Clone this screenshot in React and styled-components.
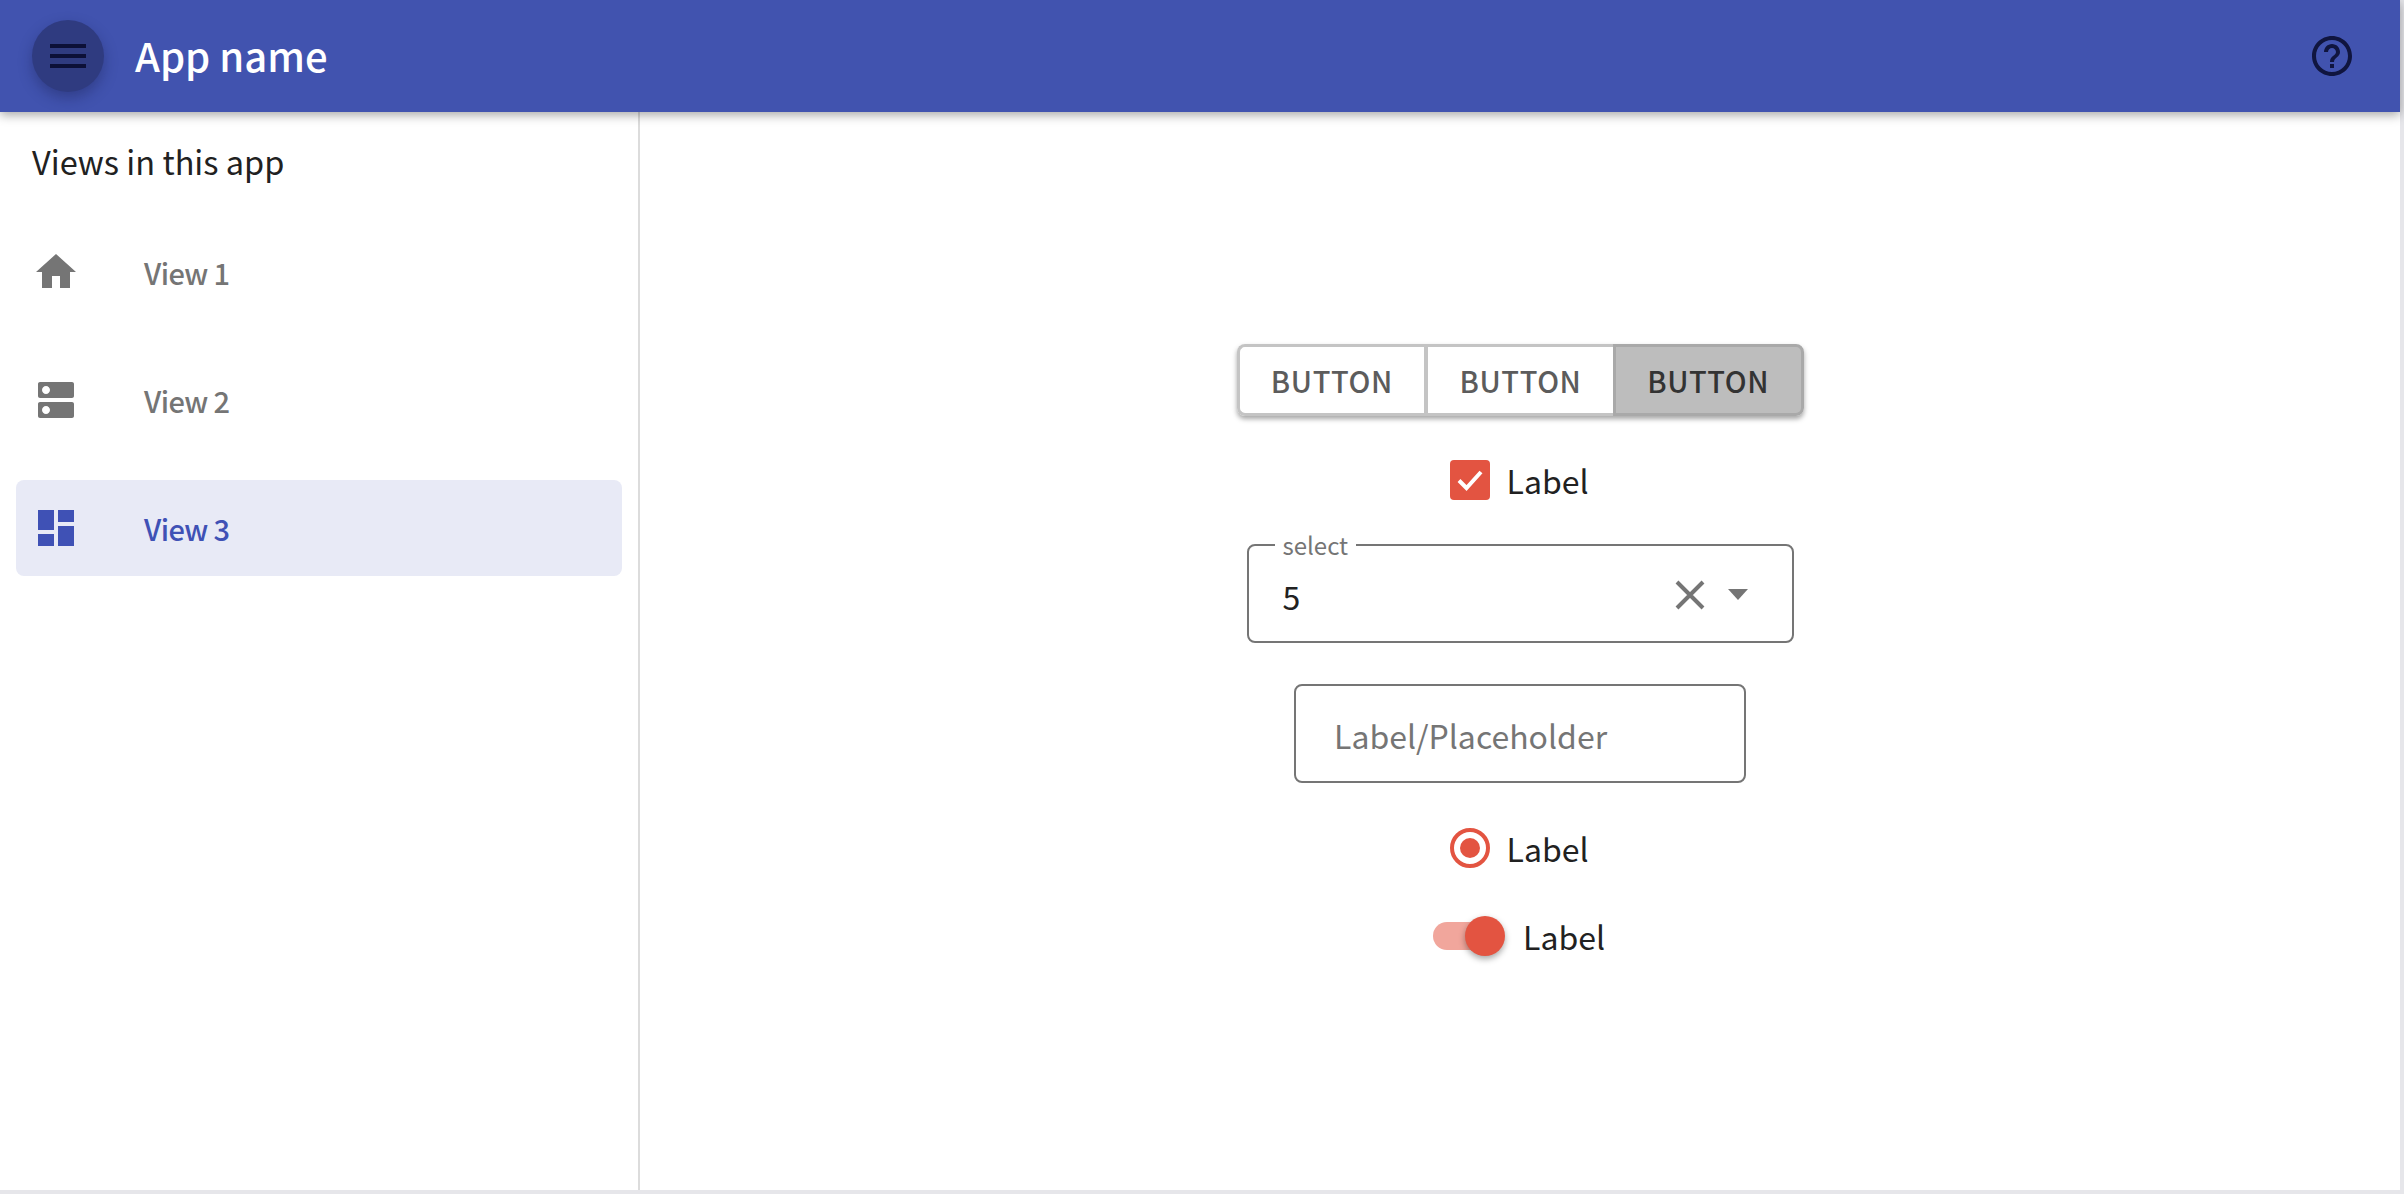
import React from 'react'
import styled, { createGlobalStyle } from 'styled-components'

const GlobalStyle = createGlobalStyle`
html, body {
  margin: 0;
  padding: 0;
  background: #e6e6ea;
}
body {
  font-family: "Noto Sans CJK JP", "Noto Sans", sans-serif;
  overflow: hidden;
}
* {
  box-sizing: border-box;
}
`;

const Page = styled.div`
width: 2400px;
height: 1190px;
background: #fff;
display: flex;
flex-direction: column;
`;

const Header = styled.header`
position: relative;
z-index: 2;
height: 112px;
flex-shrink: 0;
display: flex;
align-items: center;
padding: 0 44px 0 32px;
background: #4153af;
box-shadow: 0 3px 10px rgba(0, 0, 0, 0.35);
`;

const MenuButton = styled.div`
width: 72px;
height: 72px;
border-radius: 50%;
background: #2f3b80;
box-shadow: 0 6px 14px rgba(20, 25, 70, 0.35);
display: flex;
flex-direction: column;
justify-content: center;
align-items: center;
gap: 6px;

span {
  display: block;
  width: 36px;
  height: 4px;
  background: #0c1038;
}
`;

const AppName = styled.h1`
margin: -2px 0 0 31px;
font-size: 40px;
line-height: 56px;
font-weight: 500;
color: #fff;
flex: 1;
`;

const HelpIcon = styled.svg`
width: 48px;
height: 48px;
fill: #10153f;
`;

const Body = styled.div`
flex: 1;
display: flex;
min-height: 0;
`;

const Sidebar = styled.nav`
width: 640px;
flex-shrink: 0;
border-right: 2px solid #dcdcdc;
padding: 27px 16px 0;
`;

const SidebarTitle = styled.div`
padding-left: 16px;
font-size: 32.5px;
line-height: 44px;
color: #212121;
margin-bottom: 41px;
`;

const NavItem = styled.div`
height: 96px;
margin-bottom: 32px;
border-radius: 8px;
display: flex;
align-items: center;
padding-left: 16px;
background: ${({ active }) => (active ? '#e8eaf6' : 'transparent')};
color: ${({ active }) => (active ? '#3f51b5' : '#757575')};
font-size: 29px;
letter-spacing: -0.6px;
font-weight: 500;

svg {
  width: 48px;
  height: 48px;
  fill: currentColor;
  flex-shrink: 0;
  margin-right: 64px;
}
`;

const Main = styled.main`
flex: 1;
display: flex;
flex-direction: column;
align-items: center;
justify-content: center;
padding-bottom: 2px;
`;

const ButtonGroup = styled.div`
display: flex;
width: 567px;
height: 72px;
border-radius: 8px;
box-shadow: 0 3px 5px rgba(0, 0, 0, 0.35);
background: #fff;
`;

const GroupButton = styled.div`
flex: 1;
display: flex;
justify-content: center;
align-items: center;
font-size: 29px;
font-weight: 500;
letter-spacing: 0.6px;
color: ${({ selected }) => (selected ? '#333' : '#5c5c5c')};
background: ${({ selected }) => (selected ? '#bdbdbd' : '#fff')};
border: 3px solid ${({ selected }) => (selected ? '#a9a9a9' : '#c4c4c4')};
border-right-width: ${({ selected }) => (selected ? '3px' : '0')};
border-left-width: ${({ divided }) => (divided ? '4px' : '3px')};

&:first-child {
  border-radius: 8px 0 0 8px;
}

&:last-child {
  border-radius: 0 8px 8px 0;
}
`;

const Row = styled.div`
display: flex;
align-items: center;
height: 40px;
margin-top: ${({ top }) => top}px;
padding-right: 2px;
font-size: 32px;
color: #212121;
gap: 17px;
`;

const CheckBox = styled.div`
width: 40px;
height: 40px;
border-radius: 4px;
background: #e35441;
display: flex;
align-items: center;
justify-content: center;

svg {
  width: 30px;
  height: 30px;
  fill: none;
  stroke: #fff;
  stroke-width: 4;
}
`;

const SelectBox = styled.fieldset`
position: relative;
width: 547px;
height: 109px;
margin: 34px 0 0;
padding: 17px 0 0 26px;
border: 2px solid #757575;
border-radius: 8px;
display: flex;
align-items: center;

legend {
  padding: 0 8px;
  margin-left: 0;
  font-size: 24px;
  line-height: 22px;
  color: #757575;
}
`;

const SelectValue = styled.div`
flex: 1;
padding-left: 8px;
font-size: 32px;
color: #212121;
`;

const ClearIcon = styled.svg`
width: 32px;
height: 32px;
margin-right: 22px;
margin-top: -3px;
stroke: #757575;
stroke-width: 4;
`;

const Caret = styled.div`
width: 0;
height: 0;
margin-right: 44px;
margin-top: -3px;
border-left: 10px solid transparent;
border-right: 10px solid transparent;
border-top: 11px solid #757575;
`;

const TextBox = styled.div`
width: 452px;
height: 99px;
margin-top: 41px;
padding: 3px 0 0 38px;
border: 2px solid #757575;
border-radius: 8px;
display: flex;
align-items: center;
font-size: 32px;
color: #757575;
`;

const Radio = styled.div`
width: 40px;
height: 40px;
border-radius: 50%;
border: 4px solid #e35441;
display: flex;
align-items: center;
justify-content: center;

&::after {
  content: '';
  width: 20px;
  height: 20px;
  border-radius: 50%;
  background: #e35441;
}
`;

const SwitchTrack = styled.div`
position: relative;
width: 56px;
height: 28px;
margin-right: 17px;
border-radius: 14px;
background: #f1a69c;
`;

const SwitchThumb = styled.div`
position: absolute;
top: -6px;
left: 32px;
width: 40px;
height: 40px;
border-radius: 50%;
background: #e35441;
box-shadow: 0 3px 6px rgba(0, 0, 0, 0.35);
`;

const App = () => {
  return (
    <>
      <GlobalStyle />
      <Page>
        <Header>
          <MenuButton>
            <span />
            <span />
            <span />
          </MenuButton>
          <AppName>App name</AppName>
          <HelpIcon viewBox="0 0 24 24">
            <path d="M11 18h2v-2h-2v2zm1-16C6.48 2 2 6.48 2 12s4.48 10 10 10 10-4.48 10-10S17.52 2 12 2zm0 18c-4.41 0-8-3.59-8-8s3.59-8 8-8 8 3.59 8 8-3.59 8-8 8zm0-14c-2.21 0-4 1.79-4 4h2c0-1.1.9-2 2-2s2 .9 2 2c0 2-3 1.75-3 5h2c0-2.25 3-2.5 3-5 0-2.21-1.79-4-4-4z" />
          </HelpIcon>
        </Header>
        <Body>
          <Sidebar>
            <SidebarTitle>Views in this app</SidebarTitle>
            <NavItem>
              <svg viewBox="0 0 24 24">
                <path d="M10 20v-6h4v6h5v-8h3L12 3 2 12h3v8z" />
              </svg>
              View 1
            </NavItem>
            <NavItem>
              <svg viewBox="0 0 24 24">
                <path d="M20 13H4c-.55 0-1 .45-1 1v6c0 .55.45 1 1 1h16c.55 0 1-.45 1-1v-6c0-.55-.45-1-1-1zM7 19c-1.1 0-2-.9-2-2s.9-2 2-2 2 .9 2 2-.9 2-2 2zM20 3H4c-.55 0-1 .45-1 1v6c0 .55.45 1 1 1h16c.55 0 1-.45 1-1V4c0-.55-.45-1-1-1zM7 9c-1.1 0-2-.9-2-2s.9-2 2-2 2 .9 2 2-.9 2-2 2z" />
              </svg>
              View 2
            </NavItem>
            <NavItem active>
              <svg viewBox="0 0 24 24">
                <path d="M3 13h8V3H3v10zm0 8h8v-6H3v6zm10 0h8V11h-8v10zm0-18v6h8V3h-8z" />
              </svg>
              View 3
            </NavItem>
          </Sidebar>
          <Main>
            <ButtonGroup>
              <GroupButton>BUTTON</GroupButton>
              <GroupButton divided>BUTTON</GroupButton>
              <GroupButton selected>BUTTON</GroupButton>
            </ButtonGroup>
            <Row top={44}>
              <CheckBox>
                <svg viewBox="0 0 30 30">
                  <path d="M4 15.5 L11.5 23 L26 7" />
                </svg>
              </CheckBox>
              Label
            </Row>
            <SelectBox>
              <legend>select</legend>
              <SelectValue>5</SelectValue>
              <ClearIcon viewBox="0 0 32 32">
                <path d="M3 3 L29 29 M29 3 L3 29" />
              </ClearIcon>
              <Caret />
            </SelectBox>
            <TextBox>Label/Placeholder</TextBox>
            <Row top={45}>
              <Radio />
              Label
            </Row>
            <Row top={48}>
              <SwitchTrack>
                <SwitchThumb />
              </SwitchTrack>
              Label
            </Row>
          </Main>
        </Body>
      </Page>
    </>
  )
}

export default App
